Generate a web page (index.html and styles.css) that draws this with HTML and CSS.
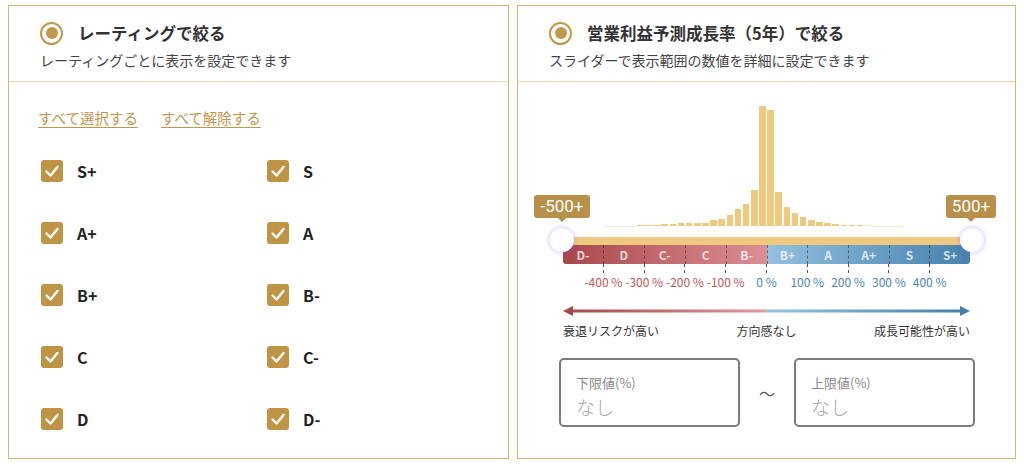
FILE: index.html
```html
<!DOCTYPE html>
<html lang="ja">
<head>
<meta charset="utf-8">
<link rel="stylesheet" href="styles.css">
</head>
<body>
<div class="panels">
  <section class="panel">
    <header class="panel-head">
      <div class="title-row"><span class="radio"></span><h2 class="title">レーティングで絞る</h2></div>
      <p class="sub">レーティングごとに表示を設定できます</p>
    </header>
    <div class="rating-body">
      <div class="links"><a class="link">すべて選択する</a><a class="link">すべて解除する</a></div>
      <div class="checks">
        <label class="check"><span class="box"><svg viewBox="0 0 22 22"><path d="M5.5 11.5 L9.5 15.5 L16.5 7" fill="none" stroke="#fff" stroke-width="2.4" stroke-linecap="round" stroke-linejoin="round"/></svg></span>S+</label>
        <label class="check"><span class="box"><svg viewBox="0 0 22 22"><path d="M5.5 11.5 L9.5 15.5 L16.5 7" fill="none" stroke="#fff" stroke-width="2.4" stroke-linecap="round" stroke-linejoin="round"/></svg></span>S</label>
        <label class="check"><span class="box"><svg viewBox="0 0 22 22"><path d="M5.5 11.5 L9.5 15.5 L16.5 7" fill="none" stroke="#fff" stroke-width="2.4" stroke-linecap="round" stroke-linejoin="round"/></svg></span>A+</label>
        <label class="check"><span class="box"><svg viewBox="0 0 22 22"><path d="M5.5 11.5 L9.5 15.5 L16.5 7" fill="none" stroke="#fff" stroke-width="2.4" stroke-linecap="round" stroke-linejoin="round"/></svg></span>A</label>
        <label class="check"><span class="box"><svg viewBox="0 0 22 22"><path d="M5.5 11.5 L9.5 15.5 L16.5 7" fill="none" stroke="#fff" stroke-width="2.4" stroke-linecap="round" stroke-linejoin="round"/></svg></span>B+</label>
        <label class="check"><span class="box"><svg viewBox="0 0 22 22"><path d="M5.5 11.5 L9.5 15.5 L16.5 7" fill="none" stroke="#fff" stroke-width="2.4" stroke-linecap="round" stroke-linejoin="round"/></svg></span>B-</label>
        <label class="check"><span class="box"><svg viewBox="0 0 22 22"><path d="M5.5 11.5 L9.5 15.5 L16.5 7" fill="none" stroke="#fff" stroke-width="2.4" stroke-linecap="round" stroke-linejoin="round"/></svg></span>C</label>
        <label class="check"><span class="box"><svg viewBox="0 0 22 22"><path d="M5.5 11.5 L9.5 15.5 L16.5 7" fill="none" stroke="#fff" stroke-width="2.4" stroke-linecap="round" stroke-linejoin="round"/></svg></span>C-</label>
        <label class="check"><span class="box"><svg viewBox="0 0 22 22"><path d="M5.5 11.5 L9.5 15.5 L16.5 7" fill="none" stroke="#fff" stroke-width="2.4" stroke-linecap="round" stroke-linejoin="round"/></svg></span>D</label>
        <label class="check"><span class="box"><svg viewBox="0 0 22 22"><path d="M5.5 11.5 L9.5 15.5 L16.5 7" fill="none" stroke="#fff" stroke-width="2.4" stroke-linecap="round" stroke-linejoin="round"/></svg></span>D-</label>
      </div>
    </div>
  </section>

  <section class="panel">
    <header class="panel-head">
      <div class="title-row"><span class="radio"></span><h2 class="title">営業利益予測成長率（5年）で絞る</h2></div>
      <p class="sub">スライダーで表示範囲の数値を詳細に設定できます</p>
    </header>
    <div class="range-body">
      <div class="range">
        <div class="hist">
          <i class="bar" style="height:0"></i><i class="bar" style="height:0"></i><i class="bar" style="height:0"></i><i class="bar" style="height:0"></i><i class="bar" style="height:0"></i>
          <i class="bar faint" style="height:0.3px"></i><i class="bar faint" style="height:0.3px"></i><i class="bar faint" style="height:0.4px"></i><i class="bar faint" style="height:0.5px"></i><i class="bar" style="height:1px"></i>
          <i class="bar" style="height:1px"></i><i class="bar" style="height:1.3px"></i><i class="bar" style="height:1.7px"></i><i class="bar" style="height:2.3px"></i><i class="bar" style="height:3px"></i>
          <i class="bar" style="height:3px"></i><i class="bar" style="height:3px"></i><i class="bar" style="height:3px"></i><i class="bar" style="height:6px"></i><i class="bar" style="height:7px"></i>
          <i class="bar" style="height:11px"></i><i class="bar" style="height:17px"></i><i class="bar" style="height:22px"></i><i class="bar" style="height:36px"></i><i class="bar" style="height:120px"></i>
          <i class="bar" style="height:116px"></i><i class="bar" style="height:34px"></i><i class="bar" style="height:19px"></i><i class="bar" style="height:13px"></i><i class="bar" style="height:9px"></i>
          <i class="bar" style="height:6px"></i><i class="bar" style="height:4px"></i><i class="bar" style="height:3px"></i><i class="bar" style="height:2px"></i><i class="bar" style="height:1.5px"></i>
          <i class="bar" style="height:1px"></i><i class="bar" style="height:1px"></i><i class="bar faint" style="height:0.7px"></i><i class="bar faint" style="height:0.5px"></i><i class="bar faint" style="height:0.4px"></i>
          <i class="bar faint" style="height:0.3px"></i><i class="bar faint" style="height:0.3px"></i><i class="bar" style="height:0"></i><i class="bar" style="height:0"></i><i class="bar" style="height:0"></i>
          <i class="bar" style="height:0"></i><i class="bar" style="height:0"></i><i class="bar" style="height:0"></i><i class="bar" style="height:0"></i><i class="bar" style="height:0"></i>
        </div>
        <div class="track"></div>
        <div class="band">
          <div class="half neg">
            <span class="seg">D-</span><span class="seg">D</span><span class="seg">C-</span><span class="seg">C</span><span class="seg">B-</span>
          </div>
          <div class="half pos">
            <span class="seg">B+</span><span class="seg">A</span><span class="seg">A+</span><span class="seg">S</span><span class="seg">S+</span>
          </div>
        </div>
        <div class="ticks">
          <span class="tick"></span><span class="tick"></span><span class="tick"></span><span class="tick"></span><span class="tick"></span>
          <span class="tick"></span><span class="tick"></span><span class="tick"></span><span class="tick"></span><span class="tick"></span>
        </div>
        <div class="pcts">
          <span class="pct red">-400 %</span><span class="pct red">-300 %</span><span class="pct red">-200 %</span><span class="pct red">-100 %</span><span class="pct blue">0 %</span>
          <span class="pct blue">100 %</span><span class="pct blue">200 %</span><span class="pct blue">300 %</span><span class="pct blue">400 %</span>
        </div>

        <span class="thumb thumb-left"></span>
        <span class="thumb thumb-right"></span>
        <span class="tip tip-left">-500+</span>
        <span class="tip tip-right">500+</span>
      </div>

      <svg class="arrow" viewBox="0 0 407 12" preserveAspectRatio="none">
        <defs>
          <linearGradient id="ag" x1="0" x2="1" y1="0" y2="0">
            <stop offset="0" stop-color="#a8474b"/>
            <stop offset="0.5" stop-color="#e3999d"/>
            <stop offset="0.5" stop-color="#96c3e1"/>
            <stop offset="1" stop-color="#4480ac"/>
          </linearGradient>
        </defs>
        <rect x="6" y="4.5" width="395" height="3" fill="url(#ag)"/>
        <path d="M0 6 L10 1 L10 11 Z" fill="#a8474b"/>
        <path d="M407 6 L397 1 L397 11 Z" fill="#4480ac"/>
      </svg>
      <div class="arrow-labels">
        <span>衰退リスクが高い</span><span>方向感なし</span><span>成長可能性が高い</span>
      </div>

      <div class="inputs">
        <div class="field"><span class="f-label">下限値(%)</span><span class="f-value">なし</span></div>
        <span class="tilde">〜</span>
        <div class="field"><span class="f-label">上限値(%)</span><span class="f-value">なし</span></div>
      </div>
    </div>
  </section>
</div>
</body>
</html>
```

FILE: styles.css
```css
* { box-sizing: border-box; }
html, body { background: #fff; }
body {
  margin: 5px 8px;
  font-family: "Noto Sans CJK JP", "Noto Sans", sans-serif;
  color: #333;
}
.panels {
  display: grid;
  grid-template-columns: 501px 499px;
  column-gap: 8px;
}
.panel {
  border: 1px solid #d6b570;
  height: 454px;
  background: #fff;
}
.panel-head {
  padding: 15px 31px 11px;
  border-bottom: 1px solid #ead8b3;
}
.title-row {
  display: flex;
  align-items: center;
  height: 24px;
}
.radio {
  width: 23px;
  height: 23px;
  border: 2.5px solid #c1984b;
  border-radius: 50%;
  display: flex;
  align-items: center;
  justify-content: center;
  flex: none;
}
.radio::after {
  content: "";
  width: 12px;
  height: 12px;
  border-radius: 50%;
  background: #c1984b;
}
.title {
  margin: 0 0 0 15px;
  font-size: 16.5px;
  font-weight: 700;
  line-height: 24px;
  color: #333;
}
.sub {
  margin: 5px 0 0;
  font-size: 14px;
  line-height: 20px;
  color: #444;
}

/* rating panel */
.rating-body {
  padding: 26px 29px 0;
}
.links {
  display: flex;
  gap: 23px;
  line-height: 20px;
}
.link {
  font-size: 14.5px;
  color: #c0974c;
  text-decoration: underline;
  text-underline-offset: 3px;
  cursor: pointer;
}
.checks {
  margin-top: 32px;
  padding-left: 3px;
  display: grid;
  grid-template-columns: 226px 226px;
  row-gap: 40px;
}
.check {
  display: flex;
  align-items: center;
  height: 22px;
  font-size: 16px;
  font-weight: 700;
  color: #222;
}
.box {
  width: 22px;
  height: 22px;
  border-radius: 3px;
  background: #bf9444;
  margin-right: 14px;
  flex: none;
}
.box svg { width: 22px; height: 22px; display: block; }

/* range panel */
.range {
  position: relative;
  padding: 24px 45px 0;
}
.hist {
  height: 120px;
  display: flex;
  align-items: flex-end;
}
.bar {
  flex: 1;
  margin: 0 0.8px;
  background: #efc97e;
}
.bar.faint { opacity: 0.45; }
.track {
  margin-top: 11px;
  height: 8px;
  background: #efc97f;
}
.band {
  display: flex;
  height: 19px;
  border-radius: 0 0 3px 3px;
  overflow: hidden;
}
.half {
  flex: 1;
  display: flex;
}
.neg { background: linear-gradient(to right, #a9474b, #dc8f93); }
.pos { background: linear-gradient(to right, #93c0df, #4781ad); }
.seg {
  flex: 1;
  display: flex;
  align-items: center;
  justify-content: center;
  font-size: 12px;
  font-weight: 700;
  color: rgba(255,255,255,0.75);
  border-left: 1px dashed rgba(60,40,40,0.55);
}
.neg .seg:first-child { border-left: none; }
.ticks {
  display: flex;
  height: 9px;
}
.tick {
  flex: 1;
  border-left: 1px dashed #555;
}
.tick:first-child { border-left: none; }
.pcts {
  display: flex;
  padding: 0 20px;
  margin-top: 1px;
  line-height: 16px;
}
.pct {
  flex: 1;
  text-align: center;
  font-size: 12px;
  white-space: nowrap;
}
.red { color: #c2555a; }
.blue { color: #4b87b5; }

.thumb {
  position: absolute;
  top: 146px;
  width: 24px;
  height: 24px;
  border-radius: 50%;
  background: #fff;
  box-shadow: 0 0 4px 1px rgba(120,110,255,0.35);
}
.thumb-left { left: 32px; }
.thumb-right { left: 442px; }
.tip {
  position: absolute;
  top: 113px;
  height: 23px;
  border-radius: 3px;
  background: #b8904a;
  color: #fff;
  font-family: "Roboto", "Liberation Sans", sans-serif;
  font-size: 17px;
  line-height: 23px;
  text-align: center;
}
.tip::after {
  content: "";
  position: absolute;
  left: 50%;
  bottom: -4px;
  margin-left: -4px;
  border-left: 4px solid transparent;
  border-right: 4px solid transparent;
  border-top: 4px solid #b8904a;
}
.tip-left { left: 16px; width: 56px; }
.tip-right { left: 428px; width: 50px; }

.arrow {
  display: block;
  margin: 15px 0 0 45px;
  width: 407px;
  height: 12px;
}
.arrow-labels {
  margin: 6px 45px 0;
  display: flex;
  justify-content: space-between;
  font-size: 12px;
  line-height: 16px;
  color: #333;
}
.inputs {
  margin-top: 19px;
  padding-left: 41px;
  display: flex;
  align-items: center;
}
.field {
  width: 181px;
  height: 69px;
  border: 2px solid #7b7b7b;
  border-radius: 5px;
  padding: 14px 0 0 15px;
  display: flex;
  flex-direction: column;
}
.f-label {
  font-size: 13px;
  line-height: 18px;
  color: #8a8a8a;
}
.f-value {
  margin-top: 3px;
  font-size: 19px;
  line-height: 24px;
  color: #aaa;
  font-weight: 300;
}
.tilde {
  width: 54px;
  text-align: center;
  font-size: 16px;
  color: #555;
}
```
